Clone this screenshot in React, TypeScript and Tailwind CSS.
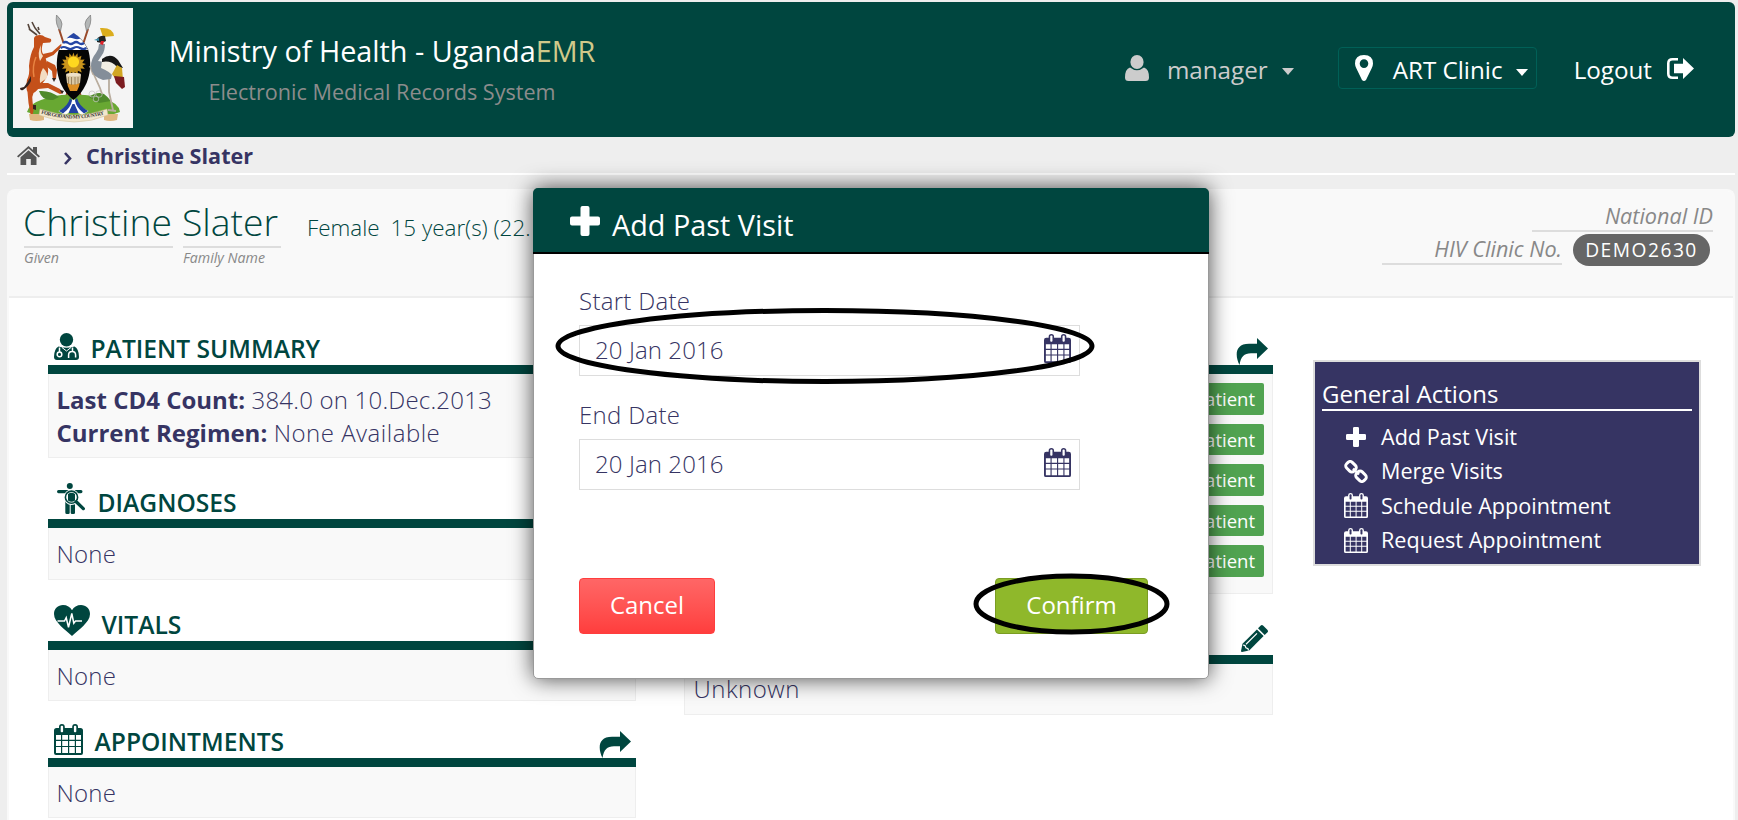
import React from "react";

type IconProps = { className?: string };

function Calendar({ className }: IconProps) {
  return (
    <svg viewBox="0 0 29 31" className={className} preserveAspectRatio="none" fill="none">
      <path d="M2.500 4h24Q29 4 29 6.500V29Q29 31 27 31H2Q0 31 0 29V6.500Q0 4 2.500 4z M2 11v4.800h5V11z M8.200 11v4.800h5.800V11z M15.200 11v4.800h5.600V11z M22 11v4.800h5V11z M2 17v4.900h5V17z M8.200 17v4.900h5.800V17z M15.200 17v4.900h5.600V17z M22 17v4.900h5V17z M2 23.100v5.900h5v-5.900z M8.200 23.100v5.900h5.800v-5.900z M15.200 23.100v5.900h5.600v-5.900z M22 23.100v5.900h5v-5.900z" fill="currentColor" fillRule="evenodd" />
      <rect x="5" y="0" width="5.800" height="9.300" rx="2.900" fill="currentColor" />
      <rect x="18.200" y="0" width="5.800" height="9.300" rx="2.900" fill="currentColor" />
      <rect x="6.700" y="1.700" width="2.400" height="6.500" rx="1" className="fill-white group-[.dark]:fill-[#363463]" />
      <rect x="19.900" y="1.700" width="2.400" height="6.500" rx="1" className="fill-white group-[.dark]:fill-[#363463]" />
    </svg>
  );
}

function Plus({ className }: IconProps) {
  return (
    <svg viewBox="0 0 30 30" className={className} fill="currentColor">
      <path d="M12.500 0h5Q19.500 0 19.500 2v8.500H28Q30 10.500 30 12.500v5Q30 19.500 28 19.500h-8.500V28Q19.500 30 17.500 30h-5Q10.500 30 10.500 28v-8.500H2Q0 19.500 0 17.500v-5Q0 10.500 2 10.500h8.500V2Q10.500 0 12.500 0z" />
    </svg>
  );
}

function Share({ className }: IconProps) {
  return (
    <svg viewBox="0 0 32 27" className={className} fill="currentColor">
      <path d="M21 0 32 10.500 21 21V15.200H15C8 15.200 5 18.500 3.500 27 -1 18-1.500 5.800 13 5.800h8z" />
    </svg>
  );
}

function PatientIcon({ className }: IconProps) {
  return (
    <svg viewBox="0 0 25 27" className={className}>
      <circle cx="12.500" cy="6.700" r="6.700" fill="currentColor" />
      <path d="M4.500 13.500Q12.500 16 20.500 13.500 25 16 25 24 25 27 22 27H3Q0 27 0 24 0 16 4.500 13.500z" fill="currentColor" />
      <g fill="none" stroke="#fff" strokeWidth="1.500">
        <path d="M5.500 14.500V19" />
        <circle cx="5.500" cy="21.400" r="2.300" />
        <path d="M18.500 14.500V18M14.600 25v-3q0-3.600 3.500-3.600t3.500 3.600v2.500" />
        <path d="M8 14.500 12.500 18 17 14.500" strokeWidth="1" />
      </g>
    </svg>
  );
}

function DiagnosesIcon({ className }: IconProps) {
  return (
    <svg viewBox="0 0 28 31" className={className}>
      <g fill="currentColor">
        <circle cx="12.800" cy="3" r="3" />
        <path d="M1.500 7h22.500q1.500 0 1.500 1.500T24 10.200H18V30q0 1-1.500 1H15q-1.300 0-1.300-1.300V21h-1v8.700Q12.700 31 11.400 31H9.800Q8.300 31 8.300 29.500V10.200H1.500Q0 10.200 0 8.600T1.500 7z" />
      </g>
      <circle cx="14.500" cy="14.200" r="7.700" fill="#fff" />
      <circle cx="14.500" cy="14.200" r="6.100" fill="none" stroke="currentColor" strokeWidth="1.600" />
      <path d="M11 11q3.500-2.500 7 0v6.500q-3.500 2.500-7 0z" fill="currentColor" />
      <path d="M19.200 18.800 26 26" stroke="#fff" strokeWidth="5" />
      <path d="M19.200 18.800 26.300 25.600" stroke="currentColor" strokeWidth="3.300" strokeLinecap="round" />
    </svg>
  );
}

function VitalsIcon({ className }: IconProps) {
  return (
    <svg viewBox="0 0 36 31" className={className} preserveAspectRatio="none">
      <path d="M18 31C12 25 0 17.500 0 9 0 3.500 4 0 9 0c4 0 7.300 2 9 5.300C19.700 2 23 0 27 0c5 0 9 3.500 9 9 0 8.500-12 16-18 22z" fill="currentColor" />
      <path d="M3.500 16h7l1.700-3.300 2.300 9.500L17.800 8.500l2 9.700 1.700-2.200h6.500" fill="none" stroke="#fff" strokeWidth="1.500" />
    </svg>
  );
}

function Pencil({ className }: IconProps) {
  return (
    <svg viewBox="0 0 27 27" className={className}>
      <g fill="currentColor">
        <path d="M19.500.8q1.400-1.400 2.800 0l4 4q1.400 1.400 0 2.800L23.700 10 17 3.300z" />
        <path d="m15.900 4.400 6.700 6.700L8.200 25.500 1 27q-1 0-1-1l1.500-7.200z" />
      </g>
      <path d="M5 19.300 16 8.400M2 20l2 .6.900 2.100 2.100.9.500 1.900" stroke="#fff" strokeWidth="1.200" fill="none" />
    </svg>
  );
}

function Link({ className }: IconProps) {
  return (
    <svg viewBox="0 0 24 23" className={className} fill="none" stroke="currentColor" strokeWidth="3">
      <rect x="-5.200" y="-4" width="10.400" height="8" rx="3" transform="translate(7 6.700) rotate(45)" />
      <rect x="-5.200" y="-4" width="10.400" height="8" rx="3" transform="translate(17 16.300) rotate(45)" />
      <path d="m9 8.700 6 5.800" strokeWidth="2.400" />
    </svg>
  );
}

function Crest({ className }: IconProps) {
  return (
    <svg viewBox="0 0 120 120" className={className}>
      <rect width="120" height="120" fill="#f4f4f4" />
      <g stroke="#9a4a2a" strokeWidth="2">
        <path d="M46 21 70 95M75 21 51 95" />
      </g>
      <path d="M43.500 7q5.500 5 5.500 9l-1.500 7q-5.500-6-4-16zM77.500 7q-5.500 5-5.500 9l1.500 7q5.500-6 4-16z" fill="#b4b7b7" stroke="#777" strokeWidth=".7" />
      <path d="M14 104q2-8 14-12 16-6 32-5 16-1 32 4 14 4 15 13l-12 4H26z" fill="#68a832" />
      <path d="M26 83q11-1 20 6l-6 3q-11 1-14-9zM76 89q8-6 15-3 4 3 7 7l-12 2z" fill="#4f8a2b" />
      <g fill="none" stroke="#c4c4c4" strokeWidth=".7">
        <circle cx="79" cy="86" r="3" />
        <circle cx="86" cy="86" r="3.300" />
        <circle cx="83" cy="91" r="2.800" />
      </g>
      <path d="M60.500 88q-1 9-15 15l6 4 9-4 9 4 6-4q-14-6-15-15z" fill="#fff" />
      <path d="M57 90q-2 8-11 13l4 2.500q8-6 9-13zM64 90q2 8 11 13l-4 2.500q-8-6-9-13zM59.500 96h2l4 9h-10z" fill="#2142a2" />
      <g fill="#c4501a">
        <path d="M21 30q1-3 6-3 3 0 5 2l6 2q1 2-1 3.500l-7 .5q-2 6-.5 10 4 5 4.500 11 2 6 .5 11-3 7-7 10-3 6-7 8-2 4-1 8l1 10-1 4-2-1-2-11-1-11q-2-4-.5-12 3-6 2-14 1-12 5-19z" />
        <path d="m30 46 9-2 9-8 1.500 2-9 9-9 4zM34 53l8 4 2 5-1 9-3 1-1-9-7-6zM22 75l13 0 12 6 3 4-3 1-12-6-10 1z" />
      </g>
      <path d="M30 60q5 4 4 10l-7 5q-1-8 3-15zM28 37q-1 8 2 11l-3 5q-3-8 1-16z" fill="#f3dcc2" />
      <path d="M23 49q-4 9-2 20" fill="none" stroke="#e98543" strokeWidth="1.500" />
      <path d="m24 27-8-6M27 26l-5-6M17 22l-2-6M22 20l-3-6M26 22l-1-3" stroke="#54443a" strokeWidth="1.600" fill="none" />
      <path d="M18 68q-3 6-7 11l-4 1q0 3 3 2 6-4 8-9zM20 97l3 0 0 5-3-1zM39 70l4 0-2 4zM47 82l4 1-2 3z" fill="#33231f" />
      <path d="M60.500 25Q70 31 75 41C80 58 77 79 60.500 92 44 79 41 58 46 41 51 31 60.500 25z" fill="#050505" />
      <path d="M60.500 25Q70 31 75 42H46Q51 31 60.500 25z" fill="#fff" />
      <path d="M60.500 25q4 2.500 7 5.500-3.500 1.500-7 0t-7 0q3-3 7-5.500z" fill="#2546a5" />
      <g fill="none" stroke="#2546a5" strokeWidth="2.200">
        <path d="M50 35q2.600-2 5.200 0t5.300 0 5.200 0 5.300 0M47.500 40q3.200-2 6.500 0t6.500 0 6.500 0 6.500 0" />
      </g>
      <path d="m60.500 43 1.600 4.600 3.200-3.700.3 4.900 4.400-2.100-1.200 4.700 4.800-.1-2.700 3.900 4.400 1.300-4.400 2 3 3.700-5-.3 1.400 4.700-4.600-2.100-.1 4.900-3.400-3.700-1.700 4.700-1.700-4.700-3.400 3.700-.1-4.900-4.600 2.100 1.400-4.700-5 .3 3-3.700-4.400-2 4.400-1.300-2.700-3.900 4.800.1-1.200-4.700 4.400 2.100.3-4.900 3.200 3.700z" fill="#c9941c" transform="translate(9 8) scale(.85)" />
      <circle cx="60.500" cy="54" r="5.600" fill="#ffd81f" />
      <path d="M54 72h13q0 6-3 11H57q-3-5-3-11z" fill="#dc8f25" />
      <path d="M53 67h15l-1 8q-6.500 3-13 0z" fill="#d9c8a6" />
      <path d="M55.500 69v7M58.500 69v8M62 69v8M65 69v7" stroke="#8d744f" strokeWidth=".8" />
      <ellipse cx="60.500" cy="66.500" rx="7.500" ry="1.800" fill="#eee1ca" />
      <path d="M96 70v14l4 18M90 70 80 66l-3-8 10 22 2 6M95 102l8 1" fill="none" stroke="#b9ad9e" strokeWidth="1.800" />
      <path d="M86 36h6q0 7-3 11l-4 6 7 1 8 8-2 9-8 1q-12-4-12-14 0-7 5-13 3-4 3-9z" fill="#848e99" />
      <path d="M89 53q10-4 16 5l2 8-6 3q-5-6-13-9z" fill="#f2eee4" />
      <path d="M89 51q9-7 16 1l5 8-6-1q-6-7-15-5z" fill="#161616" />
      <path d="m104 57 5 3 1 12-6 1-5-7z" fill="#d1a622" />
      <path d="m101 68 10 1 1 10-3 2-6-6z" fill="#7b1c20" />
      <path d="M90 29 87 20q13-1 14 8z" fill="#dbad1d" />
      <path d="M84 31q3-4 8-3l1 5q-4 3-9 1z" fill="#222" />
      <path d="m86 30-5 2 5 1z" fill="#398caa" />
      <path d="M88 33h3l-1 4-3-1z" fill="#df2029" />
      <path d="M16 106h15v6q-8 2-14 0zM91 106h14l-1 6q-7 2-13 0z" fill="#dfb77f" />
      <path d="M27 101q35 12 67 0l1 6q-33 14-69 0z" fill="#f2e7cd" stroke="#cdbb92" strokeWidth=".5" />
      <path id="motto" d="M28 105.500q33 10 66 0" fill="none" />
      <text fontFamily="Liberation Serif, serif" fontSize="5.200" fontWeight="700" fill="#333">
        <textPath href="#motto" textLength="64">FOR GOD AND MY COUNTRY</textPath>
      </text>
    </svg>
  );
}

function Section({
  icon,
  title,
  gap,
  action,
  headClass,
  children,
}: {
  icon?: React.ReactNode;
  title?: string;
  gap?: string;
  action?: React.ReactNode;
  headClass: string;
  children: React.ReactNode;
}) {
  return (
    <section>
      <div className={`flex items-end border-b-[9px] border-[#00463f] pr-[5px] text-[#00463f] ${headClass}`}>
        {icon}
        <h3 className={`text-[24.600px] leading-[32px] font-semibold whitespace-nowrap ${gap ?? ""}`}>{title}</h3>
        <span className="ml-auto">{action}</span>
      </div>
      <div className="border border-t-0 border-[#eee] bg-[#f9f9f9] text-[24px] leading-[33.300px] tracking-[0.200px]">{children}</div>
    </section>
  );
}

function DateField({ label, value, className }: { label: string; value: string; className?: string }) {
  return (
    <label className={`block ${className ?? ""}`}>
      <span className="block text-[24px] leading-[34px] tracking-[0.300px]">{label}</span>
      <span className="mt-[7px] flex h-[51px] w-[501px] items-center justify-between border border-[#ddd] bg-white pr-[8px] pl-[15px] text-[24px]">
        <span className="mb-[2px] tracking-[0.100px]">{value}</span>
        <Calendar className="mb-[4px] h-[29px] w-[27px]" />
      </span>
    </label>
  );
}

const actions = [
  { icon: <Plus className="h-5 w-5" />, label: "Add Past Visit" },
  { icon: <Link className="h-[23px] w-6" />, label: "Merge Visits" },
  { icon: <Calendar className="h-[25px] w-6" />, label: "Schedule Appointment" },
  { icon: <Calendar className="h-[25px] w-6" />, label: "Request Appointment" },
];

export default function App() {
  return (
    <div className="relative h-[820px] w-[1738px] overflow-hidden bg-[#eee] pt-[2px] pr-[3px] pl-[7px] font-['Open_Sans','Noto_Sans',sans-serif] font-[340] text-[#363463]">
      <header className="flex h-[135px] rounded-[6px] bg-[#00463f] font-normal">
        <Crest className="mt-[6px] ml-[6px] h-[120px] w-[120px] shrink-0" />
        <div className="ml-[35px] w-[428px] text-center whitespace-nowrap">
          <h1 className="mt-[30px] text-[28.800px] leading-[38px] text-white">
            Ministry of Health - Uganda<span className="text-[#d0c98a]">EMR</span>
          </h1>
          <p className="mt-[4px] text-[21.600px] leading-[36px] text-[#8c8c8c]">Electronic Medical Records System</p>
        </div>
        <nav className="mt-[45px] ml-auto flex h-[42px] items-center text-[24.200px] text-white">
          <div className="flex items-center text-[#ccc]">
            <svg viewBox="0 0 24 26" className="h-[26px] w-6" fill="currentColor">
              <ellipse cx="12" cy="7" rx="6.600" ry="7" />
              <path d="M5 12.500q7 5.500 14 0 5 1.500 5 10 0 3.500-3.500 3.500h-17Q0 26 0 22.500 0 14 5 12.500z" />
            </svg>
            <span className="mt-[4px] ml-[18px]">manager</span>
            <svg viewBox="0 0 12 7" className="mt-[8px] ml-[14px] h-[7px] w-[12px]" fill="currentColor"><path d="M0 0h12L6 7z" /></svg>
          </div>
          <div className="ml-[44px] flex h-[42px] w-[199px] items-center rounded-[4px] border border-[#006057] pl-[16px]">
            <svg viewBox="0 0 18 26" className="mr-[20px] h-[26px] w-[18px]" fill="currentColor" fillRule="evenodd">
              <path d="M9 0q9 0 9 8.500 0 2-1.300 4.700L11 25q-2 2-4 0L1.300 13.200Q0 10.500 0 8.500 0 0 9 0zm0 4.300a4.300 4.300 0 1 0 0 8.600 4.300 4.300 0 0 0 0-8.600z" />
            </svg>
            <span className="mt-[4px]">ART Clinic</span>
            <svg viewBox="0 0 12 7" className="mt-[8px] ml-[14px] h-[7px] w-[12px]" fill="currentColor"><path d="M0 0h12L6 7z" /></svg>
          </div>
          <div className="mr-[41px] ml-[37px] flex items-center">
            <span className="mt-[4px]">Logout</span>
            <svg viewBox="0 0 27 21" className="mt-px ml-[15px] h-[21px] w-[27px]" fill="currentColor">
              <path d="M16 0 27 10.500 16 21V15.200H7V5.800h9z" />
              <path d="M11 1.300H5.500q-4.200 0-4.200 4v10.400q0 4 4.200 4H11" fill="none" stroke="currentColor" strokeWidth="2.600" />
            </svg>
          </div>
        </nav>
      </header>

      <div className="flex h-[38px] items-center border-b-2 border-white pl-[10px]">
        <svg viewBox="0 0 23 19" className="h-[19px] w-[23px]" fill="#555">
          <path d="M11.500 0 16 4V1h4v6.500l3 2.700-1.300 1.300L11.500 2.600 1.300 11.500 0 10.200z" />
          <path d="m11.500 4.300 8 7V19h-5.700v-6H9.200v6H3.500v-7.700z" />
        </svg>
        <svg viewBox="0 0 8 13" className="mt-[7px] ml-[24px] h-[13px] w-2" fill="none" stroke="#363463" strokeWidth="2.600"><path d="m1 1 5 5.500L1 12" /></svg>
        <span className="mt-[2px] ml-[14px] text-[21.600px] font-bold">Christine Slater</span>
      </div>

      <main className="mt-[14px] h-[640px] rounded-t-[8px] border-2 border-b-0 border-[#f9f9f9] bg-white">
        <div className="flex h-[107px] justify-between rounded-t-[6px] border-b-2 border-[#eee] bg-[#f9f9f9]">
          <div className="flex pl-[15px] whitespace-nowrap">
            <div className="w-[149px]">
              <div className="mt-[6px] h-[51px] border-b-2 border-[#ddd] pt-[2px] text-[37.300px] leading-[46px] text-[#00463f]"><span className="-ml-px">Christine</span></div>
              <em className="block text-[14.200px] leading-[20px] font-normal text-[#888]">Given</em>
            </div>
            <div className="ml-[10px] w-[98px]">
              <div className="mt-[6px] h-[51px] border-b-2 border-[#ddd] pt-[2px] text-[37.300px] leading-[46px] text-[#00463f]"><span className="-ml-px">Slater</span></div>
              <em className="block text-[14.200px] leading-[20px] font-normal text-[#888]">Family Name</em>
            </div>
            <div className="mt-[21px] ml-[26px] text-[22.400px] leading-[32px] text-[#00463f]">
              Female<span className="ml-[11px]">15 year(s) (22.</span>
            </div>
          </div>
          <div className="mt-[9px] mr-[20px] flex flex-col items-end text-[21.600px] leading-[31px] font-normal text-[#888] italic">
            <span className="h-[32px] w-[181px] border-b-2 border-[#ddd] text-right">National ID</span>
            <div className="flex">
              <span className="h-[33px] w-[180px] border-b-2 border-[#ddd] pt-px text-right">HIV Clinic No.</span>
              <span className="mt-[2px] mr-[3px] ml-[11px] h-8 w-[137px] rounded-[16px] bg-[#666] text-center text-[19.200px] leading-[31px] tracking-[1.500px] text-white not-italic">
                DEMO2630
              </span>
            </div>
          </div>
        </div>

        <div className="flex items-start pl-[38.500px]">
          <div className="w-[588px]">
            <Section headClass="h-[76px] pl-[6px]" icon={<PatientIcon className="mb-[5px] h-[27px] w-[25px]" />} gap="ml-[12px]" title="PATIENT SUMMARY">
              <div className="h-[83px] pt-[9px] pl-[8px]">
                <p><b className="font-bold tracking-normal">Last CD4 Count:</b> 384.0 on 10.Dec.2013</p>
                <p><b className="font-bold tracking-normal">Current Regimen:</b> <span className="tracking-[0.500px]">None Available</span></p>
              </div>
            </Section>
            <Section headClass="h-[70px] pl-[9px]" icon={<DiagnosesIcon className="mb-[5px] h-[31px] w-[28px]" />} gap="ml-[13px]" title="DIAGNOSES">
              <div className="h-[51px] pt-[9px] pl-[8px]">None</div>
            </Section>
            <Section headClass="h-[70px] pl-[6px]" icon={<VitalsIcon className="mb-[5px] h-[31px] w-[36px]" />} gap="ml-[12px]" title="VITALS">
              <div className="h-[50px] pt-[9px] pl-[8px]">None</div>
            </Section>
            <Section headClass="h-[66px] pl-[6px]" icon={<Calendar className="mb-[3px] h-[31px] w-[29px]" />} gap="ml-[12px]" title="APPOINTMENTS" action={<Share className="h-[27px] w-8" />}>
              <div className="h-[50px] pt-[9px] pl-[8px]">None</div>
            </Section>
          </div>

          <div className="ml-[48px] w-[589px]">
            <Section headClass="h-[76px]" action={<Share className="h-[27px] w-8" />}>
              <div className="flex h-[219px] flex-col items-end gap-[9px] pt-[9px] pr-[8px]">
                {[0, 1, 2, 3, 4].map((i) => (
                  <span key={i} className="h-[31.500px] rounded-[2px] bg-[#51a351] px-[8.500px] text-[18.500px] leading-[31px] font-normal tracking-normal text-white">
                    Add Patient
                  </span>
                ))}
              </div>
            </Section>
            <Section headClass="h-[70px]" action={<Pencil className="mb-[3px] h-[27px] w-[27px]" />}>
              <div className="h-[50px] pt-[8px] pl-[9px] tracking-[0.500px]">Unknown</div>
            </Section>
          </div>

          <aside className="group dark mt-[62px] ml-[40.500px] h-[206px] w-[388px] border-2 border-[#ddd] bg-[#363463] px-[7px] pt-[16px] font-normal text-white">
            <h3 className="h-[33px] border-b-2 border-white text-[24px] leading-[31px]">General Actions</h3>
            <ul className="mt-[9px]">
              {actions.map((a) => (
                <li key={a.label} className="flex h-[34.400px] items-center pl-[22px] text-[21.600px]">
                  <span className="flex w-6 justify-center">{a.icon}</span>
                  <span className="ml-[13px]">{a.label}</span>
                </li>
              ))}
            </ul>
          </aside>
        </div>
      </main>

      <div className="absolute top-[188px] left-[533px] h-[491px] w-[676px] rounded-[5px] border border-[#999] bg-white shadow-[0_0_22px_rgba(0,0,0,0.7)]">
        <div className="-mx-px -mt-px flex h-[66px] rounded-t-[5px] border-b-2 border-black bg-[#00463f] pl-[37px] font-normal text-white">
          <Plus className="mt-[18px] h-[30px] w-[30px]" />
          <h2 className="mt-[18px] ml-[12px] text-[28.800px] leading-[38px]">Add Past Visit</h2>
        </div>
        <div className="pl-[45px]">
          <DateField className="mt-[30px]" label="Start Date" value="20 Jan 2016" />
          <DateField className="mt-[22px]" label="End Date" value="20 Jan 2016" />
          <div className="mt-[88px] flex w-[569px] justify-between text-[24px] leading-[34px] font-normal text-white">
            <button className="h-[56px] w-[136px] rounded-[4px] border border-[#ff3d3d] bg-linear-to-b from-[#ff6666] to-[#ff3d3d] pb-[2px]">Cancel</button>
            <button className="h-[56px] w-[153px] rounded-[4px] border border-[#7a9c23] bg-[#8fb82b] pb-[2px]">Confirm</button>
          </div>
        </div>
      </div>

      <svg className="absolute top-[307px] left-[555px] h-[78px] w-[540px]" fill="none" stroke="#000" strokeWidth="5" viewBox="0 0 540 78">
        <ellipse cx="270" cy="39" rx="267" ry="35.500" />
      </svg>
      <svg className="absolute top-[573px] left-[973px] h-[62px] w-[197px]" fill="none" stroke="#000" strokeWidth="5" viewBox="0 0 197 62">
        <ellipse cx="98.500" cy="31" rx="95.500" ry="28" />
      </svg>
    </div>
  );
}
